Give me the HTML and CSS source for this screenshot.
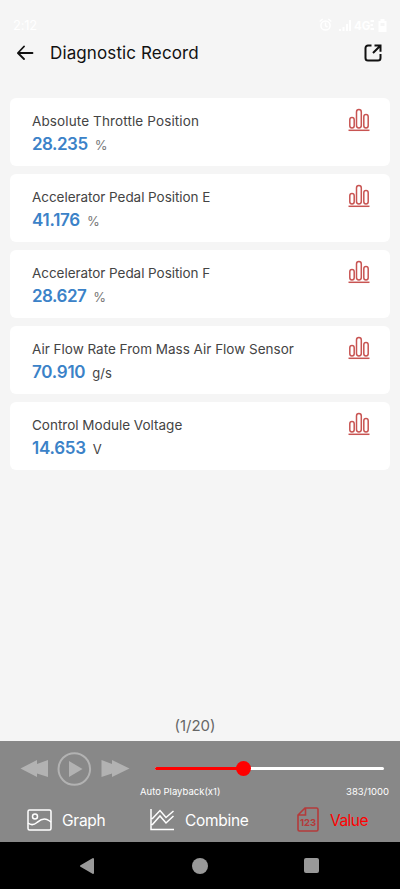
FILE: index.html
```html
<!DOCTYPE html>
<html lang="en">
<head>
<meta charset="utf-8">
<title>Diagnostic Record</title>
<link rel="stylesheet" href="styles.css">
</head>
<body>
<svg class="defs" width="0" height="0">
  <symbol id="bars" viewBox="0 0 22 24">
    <g fill="none" stroke="#c85452" stroke-width="1.5">
      <rect x="1.800" y="9.500" width="4.400" height="10.500" rx="2.200"/>
      <rect x="8.500" y="1.500" width="4.800" height="18.500" rx="2.400"/>
      <rect x="15.800" y="6.500" width="4.400" height="13.500" rx="2.200"/>
      <path d="M.5 22.300h21"/>
    </g>
  </symbol>
</svg>
<div class="screen">
  <div class="status">
    <span class="clock">2:12</span>
    <svg class="status-icons" width="72" height="16" viewBox="0 0 72 16">
      <g fill="none" stroke="#fff" stroke-width="1.5"><circle cx="9.500" cy="8.500" r="4.600"/><path d="M9.500 5.500v3.300l2 1.200M3.700 4.500l3-2.500M15.300 4.500l-3-2.500"/></g>
      <path fill="#fff" d="M23 14v-2h2v2zM26.500 14v-4h2v4zM30 14V7h2v7zM33 14V3h2v11z"/>
      <text x="38" y="13" class="net">4G</text>
      <path fill="#fff" d="M54.500 3h3.500v2h-3.500zM54.500 7h2.500v2h-2.500zM54.500 11h3.500v2h-3.500zM64.500 2h4v2h2v11h-8V4h2z"/><path fill="#f5f5f5" d="M64.500 6h4v3h-4z"/>
    </svg>
  </div>
  <header class="header">
    <svg width="18" height="16" viewBox="0 0 18 16" fill="none" stroke="#111" stroke-width="1.8" stroke-linecap="round" stroke-linejoin="round"><path d="M15.500 8H1.200M7 1.500L.9 8 7 14"/></svg>
    <h1>Diagnostic Record</h1>
    <svg width="18" height="18" viewBox="0 0 18 18" fill="none" stroke="#111" stroke-width="2"><path d="M7.500 1.500H4A2.500 2.500 0 0 0 1.500 4v10A2.500 2.500 0 0 0 4 16.500h10a2.500 2.500 0 0 0 2.500-2.500v-4M9 9l7-7M10.500 1.500h6v6.200"/></svg>
  </header>
  <main class="list">
    <article class="card"><div><h2 class="n1">Absolute Throttle Position</h2><p><b class="v1">28.235</b><span>%</span></p></div><svg width="22" height="24"><use href="#bars"/></svg></article>
    <article class="card"><div><h2 class="n2">Accelerator Pedal Position E</h2><p><b class="v2">41.176</b><span>%</span></p></div><svg width="22" height="24"><use href="#bars"/></svg></article>
    <article class="card"><div><h2 class="n2">Accelerator Pedal Position F</h2><p><b class="v1">28.627</b><span>%</span></p></div><svg width="22" height="24"><use href="#bars"/></svg></article>
    <article class="card"><div><h2>Air Flow Rate From Mass Air Flow Sensor</h2><p><b class="v2">70.910</b><span class="dark">g/s</span></p></div><svg width="22" height="24"><use href="#bars"/></svg></article>
    <article class="card"><div><h2>Control Module Voltage</h2><p><b class="v2">14.653</b><span class="dark">V</span></p></div><svg width="22" height="24"><use href="#bars"/></svg></article>
  </main>
  <div class="page">(1/20)</div>
  <footer class="player">
    <div class="controls">
      <svg width="110" height="36" viewBox="0 0 110 36" fill="#b2b2b2"><path d="M.5 17.500L17 9v4L28 9v17l-11-3.500V26zM81.500 9L92 13V9l17.500 8.500L92 26v-3.500L81.500 26z"/><circle cx="54.300" cy="18" r="15.800" fill="none" stroke="#b2b2b2" stroke-width="2"/><path d="M49 10l13.500 8L49 26z"/></svg>
      <div class="track"><div class="played" style="width:38.3%"></div><div class="thumb"></div></div>
    </div>
    <div class="captions"><span class="auto">Auto Playback(x1)</span><span class="count">383/1000</span></div>
    <nav class="tabs">
      <a class="tab graph"><svg width="25" height="22" viewBox="0 0 25 22" fill="none" stroke="#fff" stroke-width="1.5"><rect x="1" y="1" width="23" height="20" rx="1.500"/><circle cx="8" cy="7.500" r="2.500"/><path d="M1 14c3 2.500 6 2 9-.5s4-3.500 7.500-3.500 4 1.500 6.500 3"/></svg><span>Graph</span></a>
      <a class="tab combine"><svg width="25" height="22" viewBox="0 0 25 22" fill="none" stroke="#fff" stroke-width="1.500"><path d="M1 0v20.500h23M2 10l8-8.500 6 7L23.500 2M2 16l8-9 6 7 7.500-7"/></svg><span>Combine</span></a>
      <a class="tab value"><svg width="22" height="25" viewBox="0 0 22 25" fill="none" stroke="#b43a3a" stroke-width="1.600"><path d="M8 1h11.500A1.500 1.500 0 0 1 21 2.500v20a1.500 1.500 0 0 1-1.500 1.500h-17A1.500 1.500 0 0 1 1 22.500V8zM8.500 1.500V8H1.500"/><text x="11" y="18.500" class="digits">123</text></svg><span>Value</span></a>
    </nav>
  </footer>
  <div class="system">
    <svg width="16" height="18" viewBox="0 0 16 18"><path d="M2 9l12-7v14z" fill="#999" stroke="#999" stroke-width="2" stroke-linejoin="round"/></svg>
    <i class="home"></i><i class="recent"></i>
  </div>
</div>
</body>
</html>
```
FILE: styles.css
```css
* { box-sizing: border-box; }
body { margin: 0; font-family: Inter, sans-serif; background: #f5f5f5; }
h1, h2, p { margin: 0; font-weight: 400; }
svg { display: block; flex: none; }
.defs { position: absolute; }
.screen { width: 400px; height: 889px; display: flex; flex-direction: column; overflow: hidden; }
.status { height: 34px; padding: 17px 12px 0 13px; display: flex; justify-content: space-between; color: #fff; }
.clock { font-size: 13px; line-height: 16px; letter-spacing: -0.2px; }
.net { font-size: 11.5px; font-weight: 700; fill: #fff; }
.header { height: 38px; padding: 0 18px 0 17px; display: flex; align-items: center; }
.header h1 { flex: 1; margin-left: 15px; font-size: 17px; line-height: 22px; color: #111; letter-spacing: 0.12px; white-space: nowrap; }
.list { padding: 26px 10px 0; display: flex; flex-direction: column; gap: 8px; }
.card { height: 68.1px; padding: 10px 20px 0 22px; border-radius: 6px; background: #fff; display: flex; justify-content: space-between; }
.card > div { padding-top: 4px; }
.card h2 { font-size: 13.5px; line-height: 18px; color: #444; white-space: nowrap; }
.card .n1 { letter-spacing: 0.12px; }
.card .n2 { letter-spacing: -0.05px; }
.card p { display: flex; align-items: baseline; gap: 7px; line-height: 28px; }
.card b { font-size: 17px; font-weight: 600; color: #3b82c8; }
.card .v1 { letter-spacing: -0.5px; }
.card .v2 { letter-spacing: -0.25px; }
.card span { font-size: 13px; color: #777; }
.card .dark { color: #444; }
.page { margin-top: auto; height: 30px; line-height: 30px; padding-right: 10px; text-align: center; font-size: 15px; color: #666; }
.player { height: 101px; background: #888; color: #fff; }
.controls { height: 44px; padding: 10px 16px 0 20px; display: flex; align-items: flex-start; }
.track { position: relative; width: 229px; height: 3px; margin: 16px 0 0 25px; border-radius: 2px; background: #fff; }
.played { height: 3px; border-radius: 2px; background: #f00; }
.thumb { position: absolute; left: 81px; top: -6px; width: 15px; height: 15px; border-radius: 50%; background: #f00; }
.captions { height: 14px; padding: 0 11px 0 140px; display: flex; justify-content: space-between; font-size: 9.5px; line-height: 14px; }
.tabs { height: 43px; display: grid; grid-template-columns: 123px 147px 130px; }
.tab { display: flex; align-items: center; gap: 10px; padding: 0 0 2px 27px; font-size: 15.5px; }
.tab span { padding-top: 2px; }
.graph span { letter-spacing: -0.25px; }
.combine span { letter-spacing: -0.3px; }
.value { color: #f00; }
.value span { margin-left: 1px; letter-spacing: -0.5px; }
.digits { font-size: 9.5px; font-weight: 700; fill: #b43a3a; stroke: none; text-anchor: middle; }
.system { height: 47px; padding: 0 81px 0 79px; background: #000; display: flex; align-items: center; justify-content: space-between; }
.home { width: 16px; height: 16px; border-radius: 50%; background: #999; }
.recent { width: 15px; height: 15px; border-radius: 2px; background: #999; }
```
